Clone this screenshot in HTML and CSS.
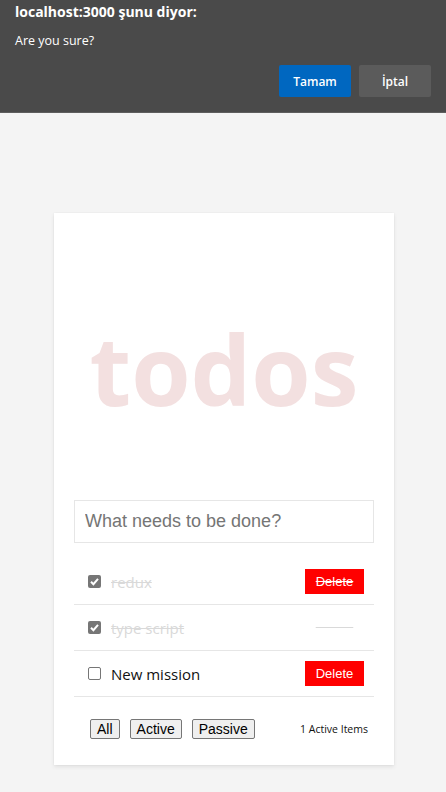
FILE: index.html
```html
<!DOCTYPE html>
<html lang="tr">
<head>
<meta charset="utf-8">
<title>todos</title>
<link rel="stylesheet" href="styles.css">
</head>
<body>
<div class="dialog">
  <div class="dialog-title">localhost:3000 şunu diyor:</div>
  <div class="dialog-msg">Are you sure?</div>
  <div class="dialog-actions">
    <button class="dlg-btn primary">Tamam</button>
    <button class="dlg-btn secondary">İptal</button>
  </div>
</div>

<main class="card">
  <h1 class="title">todos</h1>
  <input class="new-todo" type="text" placeholder="What needs to be done?">
  <ul class="list">
    <li class="item done">
      <span class="box checked"><svg viewBox="0 0 13 13" width="13" height="13"><path d="M3 6.8 L5.4 9.2 L10 3.9" fill="none" stroke="#fff" stroke-width="2"/></svg></span>
      <span class="label">redux</span>
      <button class="del">Delete</button>
    </li>
    <li class="item done">
      <span class="box checked"><svg viewBox="0 0 13 13" width="13" height="13"><path d="M3 6.8 L5.4 9.2 L10 3.9" fill="none" stroke="#fff" stroke-width="2"/></svg></span>
      <span class="label">type script</span>
      <button class="del ghost">Delete</button>
    </li>
    <li class="item">
      <span class="box"></span>
      <span class="label">New mission</span>
      <button class="del">Delete</button>
    </li>
  </ul>
  <div class="footer">
    <div class="filters">
      <button class="filter">All</button>
      <button class="filter">Active</button>
      <button class="filter">Passive</button>
    </div>
    <span class="count">1 Active Items</span>
  </div>
</main>
</body>
</html>
```

FILE: styles.css
```css
* { box-sizing: border-box; }
html, body { margin: 0; padding: 0; }
body {
  background: #f4f4f4;
  font-family: "Open Sans", "Noto Sans", sans-serif;
  width: 446px;
  height: 792px;
  overflow: hidden;
}

.dialog {
  height: 113px;
  background: #4a4a4a;
  border-bottom: 1px solid #5e5e5e;
  padding: 0 15px;
  color: #fff;
}
.dialog-title {
  font-weight: 700;
  font-size: 14px;
  line-height: 20px;
  padding-top: 2px;
}
.dialog-msg {
  font-size: 12.5px;
  line-height: 18px;
  margin-top: 10px;
}
.dialog-actions {
  display: flex;
  justify-content: flex-end;
  gap: 8px;
  margin-top: 15px;
}
.dlg-btn {
  width: 72px;
  height: 32px;
  border: none;
  border-radius: 2px;
  color: #fff;
  font-family: "Open Sans", sans-serif;
  font-weight: 600;
  font-size: 12px;
  padding: 0;
}
.dlg-btn.primary { background: #0067c0; }
.dlg-btn.secondary { background: #5b5b5b; }

.card {
  width: 340px;
  margin: 100px 0 0 54px;
  background: #fff;
  box-shadow: 0 2px 4px rgba(0,0,0,0.08), 0 0 2px rgba(0,0,0,0.05);
  padding: 106px 20px 26px;
}
.title {
  margin: 0 0 81px;
  text-align: center;
  font-family: "Open Sans", sans-serif;
  font-weight: 700;
  font-size: 96px;
  line-height: 100px;
  color: #f3e0e0;
  letter-spacing: 0;
}
.new-todo {
  display: block;
  width: 300px;
  height: 43px;
  border: 1px solid #e6e6e6;
  padding: 0 10px;
  font-family: "Liberation Sans", Arial, sans-serif;
  font-size: 18px;
  color: #333;
  outline: none;
}
.new-todo::placeholder { color: #757575; }

.list {
  list-style: none;
  margin: 16px 0 0;
  padding: 0;
}
.item {
  display: flex;
  align-items: center;
  height: 46px;
  border-bottom: 1px solid #e6e6e6;
  padding: 0 10px 0 14px;
}
.box {
  width: 13px;
  height: 13px;
  border: 1px solid #767676;
  border-radius: 2px;
  background: #fff;
  flex: none;
  display: flex;
}
.box.checked {
  background: #767676;
  border: none;
}
.label {
  margin-left: 10px;
  font-size: 15px;
  color: #111;
  flex: 1;
}
.item.done .label {
  color: #d9d9d9;
  text-decoration: line-through;
}
.del {
  width: 59px;
  height: 25px;
  border: none;
  border-radius: 0;
  background: #ff0000;
  color: #fff;
  font-family: "Liberation Sans", Arial, sans-serif;
  font-size: 13px;
  padding: 0;
}
.item.done .del { text-decoration: line-through; }
.item.done .del.ghost {
  background: #fff;
  color: #fff;
  text-decoration: line-through;
  text-decoration-color: #d9d9d9;
}

.footer {
  display: flex;
  align-items: center;
  justify-content: space-between;
  margin-top: 22px;
  padding: 0 6px 0 16px;
}
.filters {
  display: flex;
  gap: 10px;
}
.filter {
  height: 20px;
  padding: 0 6px;
  border: 1px solid #767676;
  border-radius: 2px;
  background: #efefef;
  color: #000;
  font-family: "Liberation Sans", Arial, sans-serif;
  font-size: 14px;
}
.count {
  font-size: 10.5px;
  color: #111;
}
```
